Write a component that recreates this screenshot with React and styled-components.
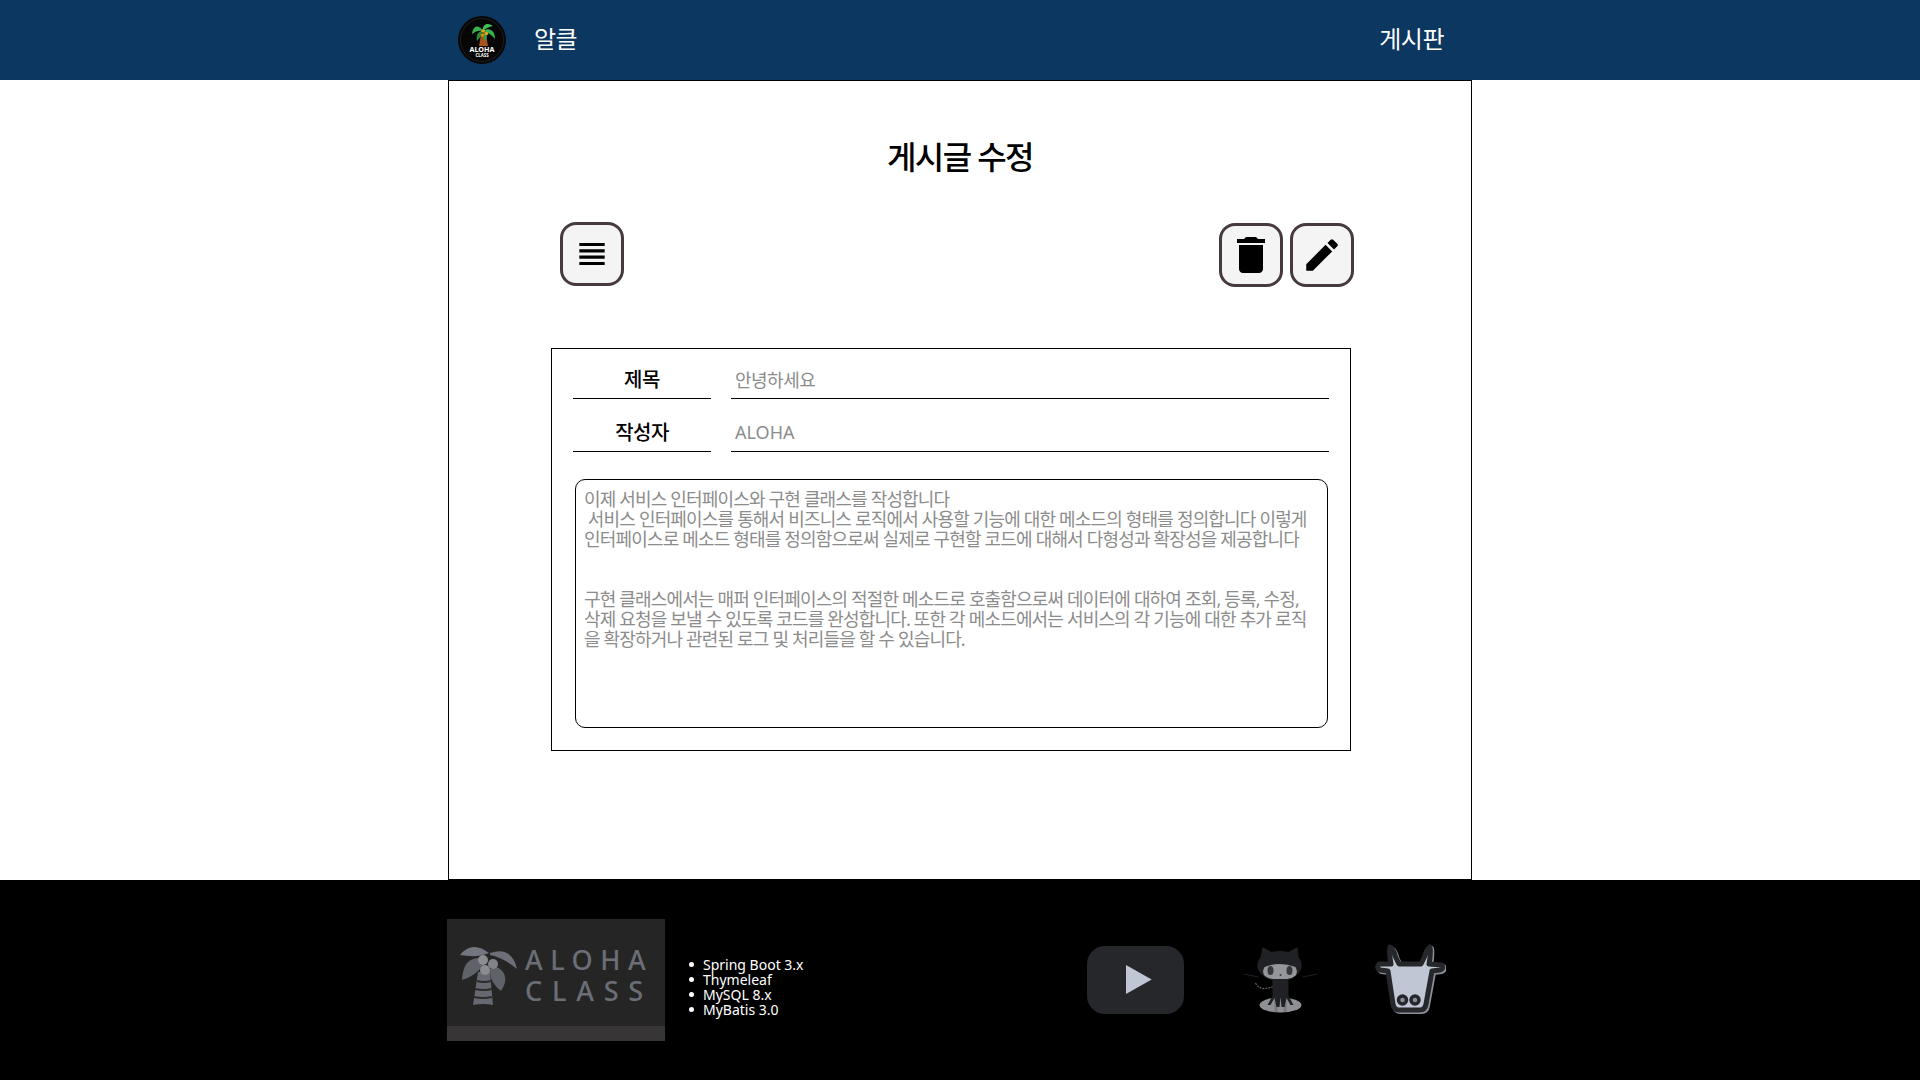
import styled, { createGlobalStyle } from "styled-components";
import { MdViewHeadline, MdDelete, MdEdit } from "react-icons/md";

const BODY_TEXT = `이제 서비스 인터페이스와 구현 클래스를 작성합니다
 서비스 인터페이스를 통해서 비즈니스 로직에서 사용할 기능에 대한 메소드의 형태를 정의합니다 이렇게 인터페이스로 메소드 형태를 정의함으로써 실제로 구현할 코드에 대해서 다형성과 확장성을 제공합니다


구현 클래스에서는 매퍼 인터페이스의 적절한 메소드로 호출함으로써 데이터에 대하여 조회, 등록, 수정, 삭제 요청을 보낼 수 있도록 코드를 완성합니다. 또한 각 메소드에서는 서비스의 각 기능에 대한 추가 로직을 확장하거나 관련된 로그 및 처리들을 할 수 있습니다.`;

function PalmLogo({ size }) {
  return (
    <svg width={size} height={size} viewBox="0 0 48 48">
      <circle cx="24" cy="24" r="24" fill="#060606" />
      <circle cx="24" cy="24" r="21.5" fill="none" stroke="#444" strokeWidth="0.4" />
      <path d="M23 18h5l2 12h-9z" fill="#a8521c" />
      <path d="M25 15C21 8 15 9 14 18 18 15 21 14 25 15z" fill="#37b24d" />
      <path d="M25 15C24 8 30 6 35 10 31 11 28 12 25 15z" fill="#40c057" />
      <path d="M25 15C31 11 37 14 37 23 33 18 29 16 25 15z" fill="#37b24d" />
      <path d="M24 15C19 16 18 20 19 25 22 22 24 19 24 15z" fill="#2b8a3e" />
      <path d="M26 15C29 18 30 22 27 25 25 22 25 18 26 15z" fill="#2f9e44" />
      <circle cx="25" cy="15" r="1.8" fill="#e8a317" />
      <circle cx="28.5" cy="17.5" r="1.8" fill="#e8a317" />
      <circle cx="24.5" cy="19" r="1.8" fill="#d98f10" />
      <LogoWord x="24" y="35.5" fontSize="7.2">ALOHA</LogoWord>
      <LogoWord x="24" y="41" fontSize="4.4">CLASS</LogoWord>
    </svg>
  );
}

function GreyPalm() {
  return (
    <svg width="57" height="62" viewBox="0 0 57 62">
      <path d="M18 28h12l3 33q-10-2-20 0z" fill="#666971" />
      <path d="M17 37q7 2 14 0M15 45q9 2 17 0M14 53q9 2 18 0" stroke="#2b2b2b" strokeWidth="2" fill="none" />
      <path d="M0 11Q12-4 29 9 18 14 0 11z" fill="#73767e" />
      <path d="M30 9Q52 2 57 25 44 14 30 11z" fill="#6c6f77" />
      <path d="M19 14Q3 14 2 36 16 32 24 20z" fill="#5f6269" />
      <path d="M35 22Q52 30 41 47 29 38 30 25z" fill="#5f6269" />
      <circle cx="23" cy="16" r="5" fill="#8b8d93" />
      <circle cx="33" cy="20" r="5" fill="#80828a" />
      <circle cx="25" cy="26" r="5" fill="#8b8d93" />
    </svg>
  );
}

function YoutubeIcon() {
  return (
    <svg width="97" height="68" viewBox="0 0 97 68">
      <rect width="97" height="68" rx="18" fill="#25272b" />
      <path d="M39 19 64.7 33.5 39 48z" fill="#c1c6d4" />
    </svg>
  );
}

function OctocatIcon() {
  return (
    <svg width="76" height="70" viewBox="-2.5 0 76 70">
      <ellipse cx="37" cy="60" rx="21" ry="7.5" fill="#8f9094" />
      <path d="M31 53h3v14h-3zM40 53h3v14h-3z" fill="#77787d" />
      <path d="M19 2 28 7q8-2 17 0L54 2l1 10q6 8 1 15-6 9-20 9T16 27q-5-7 1-15z" fill="#202124" />
      <path d="M21 22q15-6 31 0 4 8-4 11-12 3-23 0-8-3-4-11z" fill="#95969b" />
      <ellipse cx="27" cy="25.5" rx="3" ry="4.5" fill="#37383c" />
      <ellipse cx="46" cy="25.5" rx="3" ry="4.5" fill="#37383c" />
      <circle cx="37" cy="30" r="1" fill="#37383c" />
      <path d="M29 34h16v17l5 9h-3l-4-7-2 9h-3l-1-10-1 10h-3l-2-9-4 7h-3l5-9z" fill="#202124" />
      <path d="M12 38q3 6 10 5.500l7-1.500" stroke="#5c5d62" strokeWidth="1.4" strokeDasharray="2 1" fill="none" />
      <path d="M0 29 15 32M59 32 74 29" stroke="#1f2023" strokeWidth="1" fill="none" />
    </svg>
  );
}

const COW_PATH = "M16 3Q20 6 21.5 13L25 20H47L50.500 13Q52 6 56 3 57 10 55 20L68 21Q70 25 66 26L58 27 52 60Q51 66 46 66H25Q20 66 19 60L14 27 6 26Q2 24 5 20L17 20Q15 10 16 3z";

function CowIcon() {
  return (
    <svg width="72" height="72" viewBox="0 0 72 72">
      <path d={COW_PATH} fill="#8a8f9a" stroke="#8a8f9a" strokeWidth="5" strokeLinejoin="round" transform="translate(1.500 1.500)" />
      <path d={COW_PATH} fill="#c1c6d4" stroke="#25272b" strokeWidth="5" strokeLinejoin="round" />
      <circle cx="28.500" cy="56" r="4" fill="#8a8f9a" stroke="#25272b" strokeWidth="3.500" />
      <circle cx="41" cy="56" r="4" fill="#8a8f9a" stroke="#25272b" strokeWidth="3.500" />
    </svg>
  );
}

export default function App() {
  return (
    <>
      <GlobalStyle />
      <Header>
        <HeaderInner>
          <Brand>
            <PalmLogo size={48} />
            <BrandName>알클</BrandName>
          </Brand>
          <NavLink>게시판</NavLink>
        </HeaderInner>
      </Header>
      <Main>
        <Title>게시글 수정</Title>
        <Toolbar>
          <IconButton $icon={38}><MdViewHeadline /></IconButton>
          <ButtonGroup>
            <IconButton><MdDelete /></IconButton>
            <IconButton $icon={42}><MdEdit /></IconButton>
          </ButtonGroup>
        </Toolbar>
        <FormBox>
          <Row>
            <Label>제목</Label>
            <TextInput defaultValue="안녕하세요" $spacing={-0.5} />
          </Row>
          <Row>
            <Label>작성자</Label>
            <TextInput defaultValue="ALOHA" $spacing={0} />
          </Row>
          <Content defaultValue={BODY_TEXT} />
        </FormBox>
      </Main>
      <Footer>
        <FooterInner>
          <Banner>
            <BannerTop>
              <GreyPalm />
              <BannerWords>
                <BannerWord $spacing={7.5}>ALOHA</BannerWord>
                <BannerWord $spacing={9.8}>CLASS</BannerWord>
              </BannerWords>
            </BannerTop>
            <BannerBand />
          </Banner>
          <StackList>
            <StackItem>Spring Boot 3.x</StackItem>
            <StackItem>Thymeleaf</StackItem>
            <StackItem>MySQL 8.x</StackItem>
            <StackItem>MyBatis 3.0</StackItem>
          </StackList>
          <Links>
            <YoutubeIcon />
            <OctocatIcon />
            <CowIcon />
          </Links>
        </FooterInner>
      </Footer>
    </>
  );
}

const GlobalStyle = createGlobalStyle`
  * { box-sizing: border-box; }
  body {
    margin: 0;
    background: #fff;
    font-family: "Noto Sans", "Noto Sans CJK KR", sans-serif;
  }
`

const Header = styled.header`
  height: 80px;
  background-color: #0c3760;
`

const HeaderInner = styled.div`
  width: 1024px;
  height: 100%;
  margin: 0 auto;
  padding: 0 28px 0 10px;
  display: flex;
  align-items: center;
  justify-content: space-between;
  color: #fff;
  font-size: 24px;
`

const Brand = styled.div`
  display: flex;
  align-items: center;
  gap: 28px;
`

const BrandName = styled.span`
  margin-bottom: 5px;
  letter-spacing: -0.5px;
`

const NavLink = styled.a`
  margin-bottom: 5px;
  letter-spacing: -0.5px;
`

const Main = styled.main`
  width: 1024px;
  height: 800px;
  margin: 0 auto;
  border: 1px solid #000;
  padding-top: 48px;
`

const Title = styled.h2`
  margin: 0;
  text-align: center;
  font-size: 32px;
  font-weight: 500;
  line-height: 56px;
  letter-spacing: -1.6px;
`

const Toolbar = styled.div`
  margin: 37px 117px 0 111px;
  display: flex;
  justify-content: space-between;
`

const ButtonGroup = styled.div`
  margin-top: 1px;
  display: flex;
  gap: 7px;
`

const IconButton = styled.button`
  width: 64px;
  height: 64px;
  padding: 0;
  display: flex;
  align-items: center;
  justify-content: center;
  border: 3px solid #463a3c;
  border-radius: 16px;
  background: #f4f4f4;
  font-size: ${({ $icon }) => $icon || 48}px;
  color: #000;
`

const FormBox = styled.form`
  width: 800px;
  height: 403px;
  margin: 61px 0 0 102px;
  border: 1px solid #000;
  padding: 0 21px;
  display: flex;
  flex-direction: column;
  gap: 3px;
`

const Row = styled.div`
  height: 50px;
  display: grid;
  grid-template-columns: 138px 1fr;
  gap: 20px;
`

const Label = styled.div`
  height: 50px;
  line-height: 62px;
  text-align: center;
  font-size: 20px;
  font-weight: 500;
  letter-spacing: -0.5px;
  border-bottom: 1px solid #000;
`

const TextInput = styled.input`
  width: 100%;
  height: 50px;
  padding: 10px 4px 0;
  border: 0;
  border-bottom: 1px solid #000;
  outline: none;
  font: inherit;
  font-size: 18px;
  letter-spacing: ${({ $spacing }) => $spacing}px;
  color: #8c8c8c;
`

const Content = styled.textarea`
  display: block;
  width: 753px;
  height: 249px;
  margin: 24px 0 0 2px;
  padding: 9px 16px 9px 8px;
  border: 1px solid #000;
  border-radius: 10px;
  resize: none;
  outline: none;
  overflow: hidden;
  font: inherit;
  font-size: 18px;
  line-height: 20px;
  letter-spacing: -0.83px;
  color: #8c8c8c;
`

const Footer = styled.footer`
  height: 200px;
  background-color: #000;
`

const FooterInner = styled.div`
  width: 1024px;
  height: 100%;
  margin: 0 auto;
  display: flex;
  align-items: center;
`

const Banner = styled.div`
  width: 218px;
  height: 122px;
  margin-left: -1px;
  display: flex;
  flex-direction: column;
  background-color: #252525;
`

const BannerTop = styled.div`
  flex: 1;
  display: flex;
  align-items: center;
  gap: 8px;
  padding: 5px 0 0 13px;
`

const BannerWords = styled.div`
  display: flex;
  flex-direction: column;
  color: #6b6e76;
  font-size: 27px;
  font-weight: 500;
  line-height: 31px;
`

const BannerWord = styled.span`
  letter-spacing: ${({ $spacing }) => $spacing}px;
`

const BannerBand = styled.div`
  height: 15px;
  background-color: #373535;
`

const StackList = styled.ul`
  margin: 14px 0 0 24px;
  padding: 0;
  list-style: none;
  color: #fff;
  font-size: 14px;
  line-height: 15px;
`

const StackItem = styled.li`
  display: flex;
  align-items: center;

  &::before {
    content: "";
    width: 5px;
    height: 5px;
    margin: 0 9px 0 0;
    border-radius: 50%;
    background-color: #fff;
  }
`

const Links = styled.div`
  margin-left: auto;
  margin-right: 26px;
  display: flex;
  align-items: center;
  gap: 57px;
`

const LogoWord = styled.text`
  fill: #fff;
  text-anchor: middle;
  font-weight: 700;
  font-family: "Noto Sans", sans-serif;
`
